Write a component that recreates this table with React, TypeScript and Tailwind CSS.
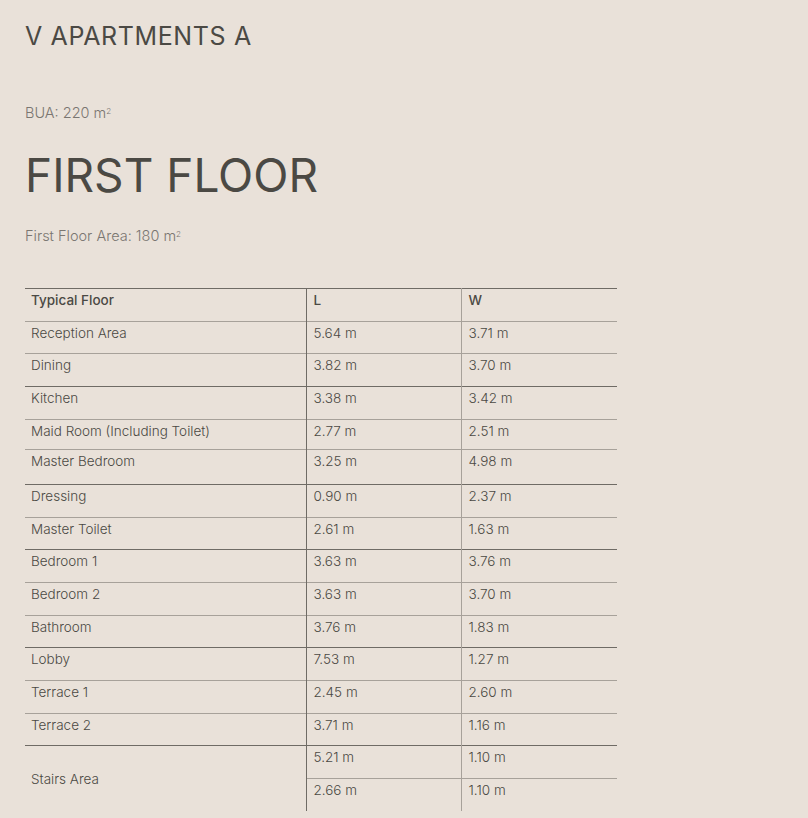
import React from 'react';

type Row = { name: string; l: string; w: string; h: number; dark: boolean };

const rows: Row[] = [
  { name: 'Reception Area', l: '5.64 m', w: '3.71 m', h: 32, dark: false },
  { name: 'Dining', l: '3.82 m', w: '3.70 m', h: 33, dark: false },
  { name: 'Kitchen', l: '3.38 m', w: '3.42 m', h: 33, dark: true },
  { name: 'Maid Room (Including Toilet)', l: '2.77 m', w: '2.51 m', h: 30, dark: false },
  { name: 'Master Bedroom', l: '3.25 m', w: '4.98 m', h: 35, dark: false },
  { name: 'Dressing', l: '0.90 m', w: '2.37 m', h: 33, dark: true },
  { name: 'Master Toilet', l: '2.61 m', w: '1.63 m', h: 32, dark: false },
  { name: 'Bedroom 1', l: '3.63 m', w: '3.76 m', h: 33, dark: true },
  { name: 'Bedroom 2', l: '3.63 m', w: '3.70 m', h: 33, dark: false },
  { name: 'Bathroom', l: '3.76 m', w: '1.83 m', h: 32, dark: false },
  { name: 'Lobby', l: '7.53 m', w: '1.27 m', h: 33, dark: true },
  { name: 'Terrace 1', l: '2.45 m', w: '2.60 m', h: 33, dark: false },
  { name: 'Terrace 2', l: '3.71 m', w: '1.16 m', h: 32, dark: false },
];

const cell = 'align-top pt-[2px] pl-[6px] leading-[18px]';

export default function App() {
  return (
    <div className="min-h-screen bg-[#e9e1d9] text-[#4b4944] font-['Inter',sans-serif] pl-[25px] pt-[22px] pb-2">
      <h1 className="text-[25px] leading-[28px] tracking-[0.025em] font-normal">V APARTMENTS A</h1>
      <p className="mt-[53px] text-[14.5px] leading-[20px] font-light text-[#7a7671]">
        BUA: 220 m<sup className="text-[8px]">2</sup>
      </p>
      <h2 className="mt-[26px] text-[46px] leading-[52px] tracking-normal font-normal">FIRST FLOOR</h2>
      <p className="mt-[25px] text-[14.5px] leading-[20px] font-light text-[#7a7671]">
        First Floor Area: 180 m<sup className="text-[8px]">2</sup>
      </p>
      <table className="mt-[42px] w-[592px] border-collapse table-fixed text-[13.5px] font-light">
        <colgroup>
          <col className="w-[281px]" />
          <col className="w-[155px]" />
          <col className="w-[156px]" />
        </colgroup>
        <tbody>
          <tr className="h-[33px] border-t border-[#6f6b65]">
            <td className={`${cell} font-medium border-r border-[#6f6b65]`}>Typical Floor</td>
            <td className={`${cell} pl-[7px] font-medium border-r border-[#a7a19a]`}>L</td>
            <td className={`${cell} pl-[7px] font-medium`}>W</td>
          </tr>
          {rows.map((r) => (
            <tr
              key={r.name}
              style={{ height: r.h }}
              className={r.dark ? 'border-t border-[#6f6b65]' : 'border-t border-[#a7a19a]'}
            >
              <td className={`${cell} border-r border-[#6f6b65]`}>{r.name}</td>
              <td className={`${cell} pl-[7px] border-r border-[#a7a19a]`}>{r.l}</td>
              <td className={`${cell} pl-[7px]`}>{r.w}</td>
            </tr>
          ))}
          <tr className="h-[33px] border-t border-[#6f6b65]">
            <td rowSpan={2} className="align-middle pl-[6px] pt-[2px] border-r border-[#6f6b65]">
              Stairs Area
            </td>
            <td className={`${cell} pl-[7px] border-r border-[#a7a19a]`}>5.21 m</td>
            <td className={`${cell} pl-[7px]`}>1.10 m</td>
          </tr>
          <tr className="h-[32px] border-t border-[#a7a19a]">
            <td className={`${cell} pl-[7px] border-r border-[#a7a19a] border-t border-t-[#a7a19a]`}>2.66 m</td>
            <td className={`${cell} pl-[7px] border-t border-t-[#a7a19a]`}>1.10 m</td>
          </tr>
        </tbody>
      </table>
    </div>
  );
}
